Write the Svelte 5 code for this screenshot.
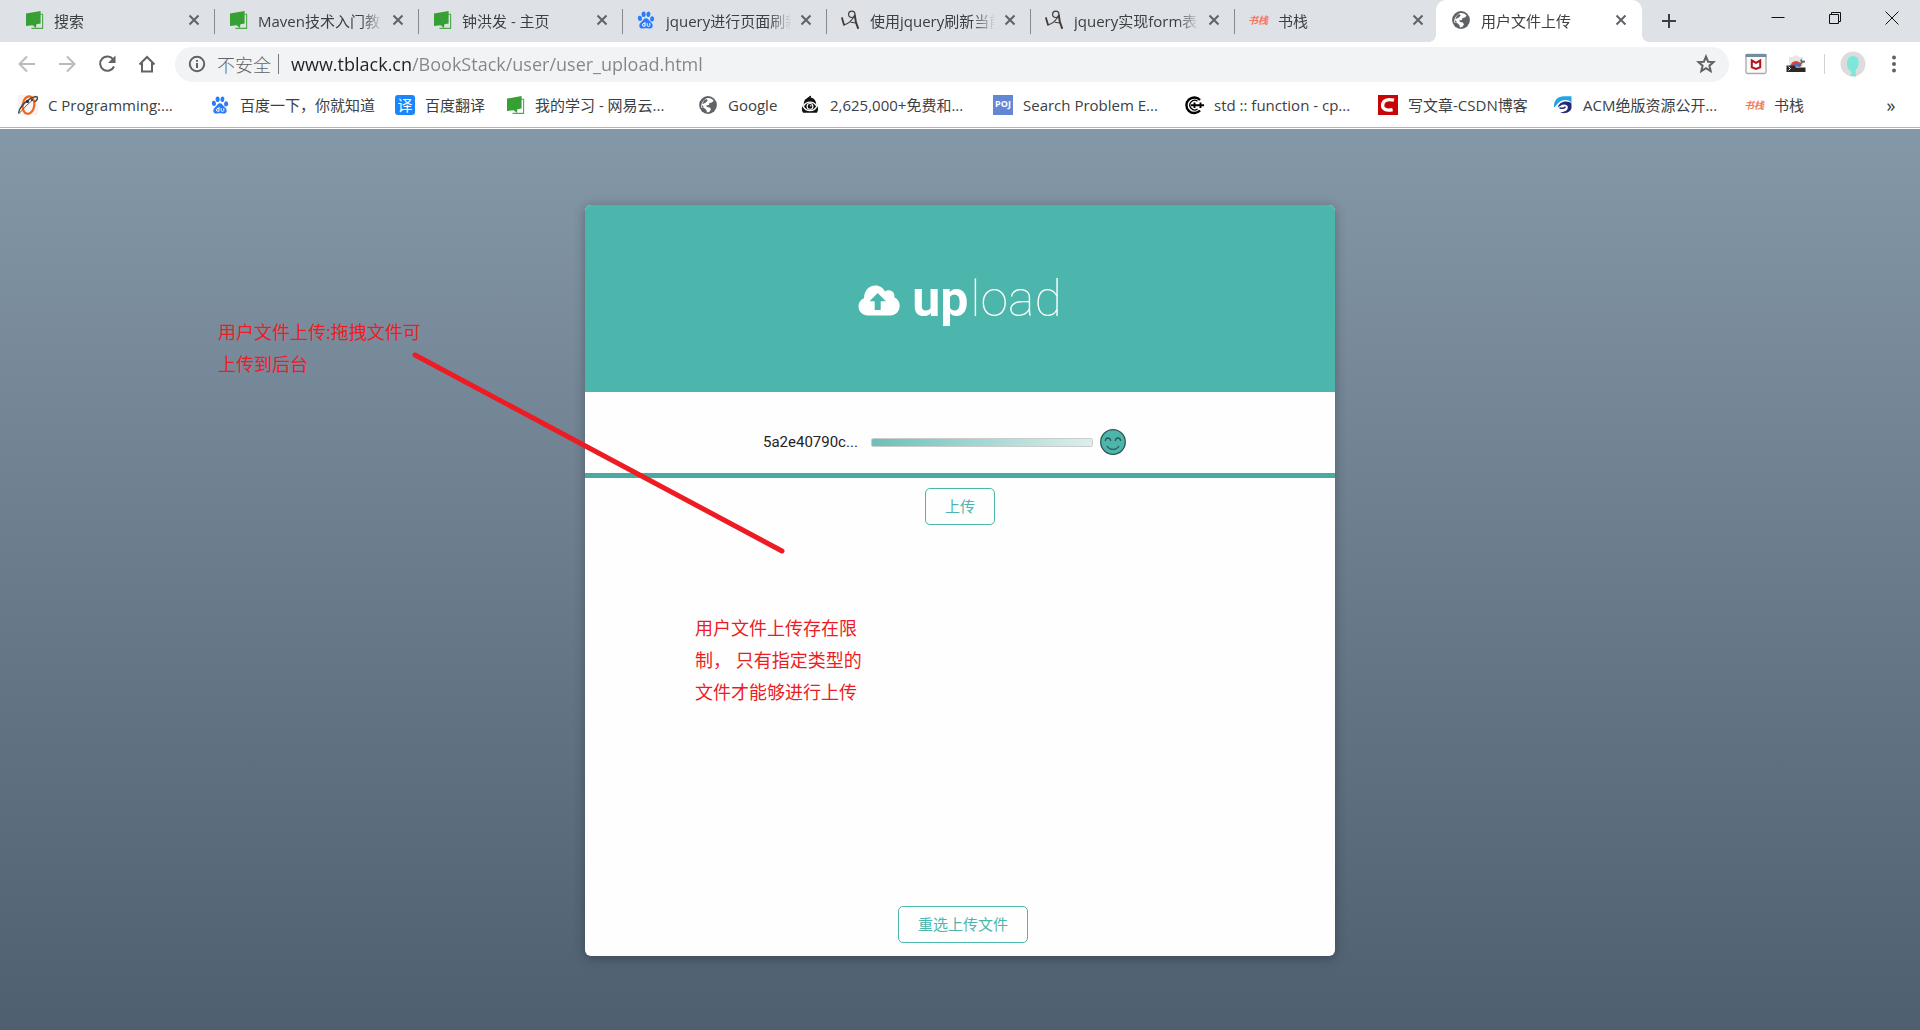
<script>
  const tabs = [
    { icon: 'book', title: '搜索' },
    { icon: 'book', title: 'Maven技术入门教' },
    { icon: 'book', title: '钟洪发 - 主页' },
    { icon: 'baidu', title: 'jquery进行页面刷新' },
    { icon: 'script', title: '使用jquery刷新当前' },
    { icon: 'script', title: 'jquery实现form表' },
    { icon: 'stack', title: '书栈' },
    { icon: 'globe', title: '用户文件上传', active: true }
  ];

  const bookmarks = [
    { icon: 'orbit', title: 'C Programming:...' },
    { icon: 'baidu', title: '百度一下，你就知道' },
    { icon: 'fanyi', title: '百度翻译' },
    { icon: 'book', title: '我的学习 - 网易云...' },
    { icon: 'globe', title: 'Google' },
    { icon: 'eye', title: '2,625,000+免费和...' },
    { icon: 'poj', title: 'Search Problem E...' },
    { icon: 'cpp', title: 'std :: function - cp...' },
    { icon: 'csdn', title: '写文章-CSDN博客' },
    { icon: 'acm', title: 'ACM绝版资源公开...' },
    { icon: 'stack', title: '书栈' }
  ];

  let url = $state('www.tblack.cn/BookStack/user/user_upload.html');
</script>

{#snippet favicon(name)}
  {#if name === 'stack'}
    <span class="fav stack-mark" aria-hidden="true">书栈</span>
  {:else if name === 'fanyi'}
    <span class="fav fanyi-mark" aria-hidden="true">译</span>
  {:else if name === 'poj'}
    <span class="fav poj-mark" aria-hidden="true">POJ</span>
  {:else}
    <svg class="fav" viewBox="0 0 20 20" aria-hidden="true">
      {#if name === 'book'}
        <path d="M15.5 4.2h3.1v14.2H7.5" fill="none" stroke="#4fa94a" stroke-width="1.1" />
        <path d="M2 3.6 16.6 1v12.6l-4.2.6-.5 3.8-3.2-2.7L2 15.9z" fill="#37a035" />
      {:else if name === 'baidu'}
        <g fill="#2b7cf6">
          <ellipse cx="3.9" cy="8.4" rx="2.1" ry="2.7" transform="rotate(-12 3.9 8.4)" />
          <ellipse cx="7.6" cy="4.2" rx="2" ry="2.8" />
          <ellipse cx="12.4" cy="4.3" rx="2" ry="2.8" transform="rotate(8 12.4 4.3)" />
          <ellipse cx="16.1" cy="8.9" rx="2" ry="2.7" transform="rotate(8 16.1 8.9)" />
          <path d="M10 8.2c2 0 2.6 1.8 3.8 3 1.400 1.300 3.200 2.500 2.900 4.800-.3 2.300-2.300 2.800-4 2.500-2-.3-3.500-.3-5.400 0-1.900.3-3.800-.3-4-2.600-.2-2.200 1.500-3.300 2.900-4.700C7.400 10 8 8.200 10 8.200z" />
        </g>
        <path d="M9 12v4.500M9 14.200a1.400 1.400 0 1 0 0 1.400M11.200 13.200v2.200c0 1.400 2.600 1.400 2.600 0v-2.200" fill="none" stroke="#fff" stroke-width="1" />
      {:else if name === 'script'}
        <g fill="none" stroke="#403b38" stroke-linecap="round" stroke-linejoin="round">
          <circle cx="11.800" cy="4.300" r="3.200" stroke-width="1.200" />
          <path d="M2 8 4 14.800" stroke-width="1.800" />
          <path d="M4 14.800C8 14.300 11.500 10.500 13.800 7M11 12.300l4.800.7" stroke-width="1.100" />
          <path d="M14.800 5.500c.4 4.500 1.300 8.500 3.200 12.500" stroke-width="2" />
        </g>
      {:else if name === 'globe'}
        <circle cx="10" cy="10" r="8.900" fill="#5f6368" />
        <path d="M9.600 2.900c2.600-.2 4.900 1 6.100 2.900l-1.800 1.700-2.400.4-.6 2-2.800.5 1 1.600 2.700.5 1.200 1.700-1.500 2.600-2.500.8-.6-2.700-2-1.700-3.300-.8C2.800 8.500 5.500 4 9.600 2.900z" fill="#fff" />
        <path d="m6 5.500 2.500-1.600 1.200 1.700-2.200 2.200L4.200 9.300zM3.200 10.500l2 .3.500 3.400z" fill="#5f6368" />
      {:else if name === 'orbit'}
        <rect width="20" height="20" fill="#f4f4f4" />
        <ellipse cx="10.500" cy="10" rx="5.800" ry="8.800" fill="none" stroke="#f1661b" stroke-width="2.200" transform="rotate(8 10 10)" />
        <path d="M1 18.500C-.5 15 6 7.500 12 3.800c4-2.500 7.500-2.800 7.500-.8 0 1.500-1.500 3-3 4" fill="none" stroke="#444" stroke-width="1.400" />
        <path d="m1 18.500 8-8.500 5-4.500" fill="none" stroke="#666" stroke-width="1" />
        <circle cx="9.500" cy="6.500" r="1.500" fill="#222" /><circle cx="14" cy="5" r="1" fill="#222" />
      {:else if name === 'eye'}
        <path d="M7 3.200 9.800 1c1.500-.6 1.800.8.600 1.500 3.800.6 6 3.500 5.800 7.300 2.200 2 2.600 5.200.6 8H3.200c-2-2.800-1.600-6 .6-8C3.600 6.500 4.600 4.500 7 3.200z" fill="#111" />
        <path d="M3.200 11.400C6.200 5.700 13.800 5.700 16.800 11.400 13.800 17.100 6.200 17.100 3.200 11.400z" fill="none" stroke="#fff" stroke-width="1.300" />
        <circle cx="10" cy="11.400" r="2.900" fill="none" stroke="#fff" stroke-width="1.100" /><circle cx="10.800" cy="10.800" r=".8" fill="#fff" />
      {:else if name === 'cpp'}
        <path d="M16 5A7.800 7.800 0 1 0 16 15.500" fill="none" stroke="#000" stroke-width="2.400" />
        <path d="M13.500 6.200A4.800 4.800 0 1 0 13.500 14" fill="none" stroke="#000" stroke-width="1.300" />
        <path d="M7 10.200h13M10.500 7.500v5.500M16.500 7.500v5.500" stroke="#000" stroke-width="1.900" />
      {:else if name === 'csdn'}
        <rect width="20" height="20" fill="#c90404" />
        <path d="M16 5.200C9.500 3.500 5 5.500 4.600 10c-.3 4.200 3.800 6 10 4.600" fill="none" stroke="#fff" stroke-width="3.400" />
      {:else if name === 'acm'}
        <path d="M1 12.500C.5 5 5 1.200 11 1.200h7.500v7C17 5 12 4 8 6 4.500 7.800 3.500 11 1 12.500z" fill="#20a6e5" />
        <path d="M18.500 8.500v4.500c-1 4.500-7 6.500-11.500 4.300 5.500 0 8-2.500 7.800-5.300-.2-2.500-3.800-3.500-7-1.500l-3 2c.8-3.800 4.200-6 8-6 3 0 4.700.8 5.700 2z" fill="#252a78" />
        <path d="M6.500 13c2.500.6 4.800.2 6-1.300" fill="none" stroke="#252a78" stroke-width="1.500" />
      {/if}
    </svg>
  {/if}
{/snippet}

<div class="window">
  <header class="chrome">
    <div class="tab-strip">
      <div class="tabs" role="tablist">
        {#each tabs as tab}
          <div class="tab" class:active={tab.active}>
            {@render favicon(tab.icon)}
            <button class="tab-title" role="tab" aria-selected={!!tab.active}>{tab.title}</button>
            <button class="tab-close" aria-label="关闭标签页">
              <svg viewBox="0 0 12 12"><path d="m1.500 1.500 9 9m0-9-9 9" /></svg>
            </button>
          </div>
        {/each}
      </div>
      <button class="new-tab" aria-label="新标签页">
        <svg viewBox="0 0 16 16"><path d="M8 1v14M1 8h14" /></svg>
      </button>
      <div class="window-controls">
        <button aria-label="最小化"><svg viewBox="0 0 14 14"><path d="M.5 6.500h13" /></svg></button>
        <button aria-label="还原"><svg viewBox="0 0 14 14"><path d="M1.500 3.500h9v9h-9zM3.500 3.500v-2h9v9h-2" /></svg></button>
        <button aria-label="关闭"><svg viewBox="0 0 14 14"><path d="m.5.5 13 13m0-13-13 13" /></svg></button>
      </div>
    </div>

    <div class="toolbar">
      <nav class="nav-buttons" aria-label="导航">
        <button class="dim" aria-label="后退"><svg viewBox="0 0 20 20"><path d="M18 10H3M10 2.500 2.500 10l7.500 7.500" /></svg></button>
        <button class="dim" aria-label="前进"><svg viewBox="0 0 20 20"><path d="M2 10h15M10 2.500l7.500 7.500-7.500 7.500" /></svg></button>
        <button aria-label="重新加载"><svg viewBox="0 0 20 20"><path d="M16.300 5.500A7.200 7.200 0 1 0 17 12.500" /><path class="solid" d="M18.500 1.500v7.500H11z" /></svg></button>
        <button aria-label="主页"><svg viewBox="0 0 20 20"><path d="M2.500 10.500 10 3l7.500 7.500M5 9v8.500h10V9" /></svg></button>
      </nav>
      <div class="omnibox">
        <svg class="info" viewBox="0 0 18 18" aria-hidden="true"><circle cx="9" cy="9" r="7.200" /><path d="M9 8v5M9 5v1.800" /></svg>
        <span class="insecure">不安全</span>
        <span class="bar"></span>
        <input class="url" type="text" aria-label="地址栏" bind:value={url} />
        <button class="star" aria-label="为此标签页添加书签">
          <svg viewBox="0 0 20 20"><path d="m10 2.500 2.100 5.200 5.500.4-4.200 3.600 1.300 5.500L10 14.200l-4.700 3 1.300-5.500L2.400 8.100l5.500-.4z" /></svg>
        </button>
      </div>
      <div class="extensions">
        <button aria-label="McAfee">
          <svg viewBox="0 0 22 22"><rect x="1" y="1.500" width="20" height="19" rx="1.500" fill="#fafafa" stroke="#aaa" stroke-width="1.300" /><path d="M.5 1h21v3H.5z" fill="#728d9b" /><path d="M6.800 7.500 11 9.800l4.200-2.300v6.800L11 16l-4.200-1.700z" fill="none" stroke="#b5121b" stroke-width="2" /></svg>
        </button>
        <button aria-label="开发者工具">
          <svg viewBox="0 0 22 22"><path d="M4 4h4l1-1.500h4L14 4h4v9H4z" fill="#e6e6e6" /><path d="M5.500 13.500a5.500 5.500 0 0 1 11 0z" fill="#e24335" /><path d="M8.500 13.500a3 3 0 0 1 6 0z" fill="#3975d8" /><path d="m13.500 13.500 4-5m-1.500-2 .8 2.500 3.200-.5" fill="none" stroke="#666" stroke-width="1.800" /><path d="M1.500 12.500h8l1.500 2h9.500v4.500h-19z" fill="#292929" /><path d="m3.500 13.500 2 2-2 2" fill="none" stroke="#fff" stroke-width="1" /></svg>
        </button>
        <span class="divider"></span>
        <button class="avatar" aria-label="个人资料">
          <svg viewBox="0 0 26 26"><circle cx="13" cy="13" r="12.500" fill="#dcdcdc" /><path d="M13 5c4 0 6 3 5.700 7-.2 3.500-1.500 5.500-3 6.500v3c0 1.500.8 2.500.3 3.900-2 .2-5-.1-6.500-1.100 2-.8 2.300-3.300 1-4.300C8 18.500 7 15.500 7 12c0-4 2-7 6-7z" fill="#7de8d9" /></svg>
        </button>
        <button class="menu" aria-label="菜单">
          <svg viewBox="0 0 20 20"><circle cx="10" cy="3.500" r="2" /><circle cx="10" cy="10" r="2" /><circle cx="10" cy="16.500" r="2" /></svg>
        </button>
      </div>
    </div>

    <nav class="bookmarks" aria-label="书签">
      {#each bookmarks as mark}
        <a href="#bookmark">{@render favicon(mark.icon)}<span>{mark.title}</span></a>
      {/each}
      <button class="more" aria-label="更多书签">»</button>
    </nav>
  </header>

  <main class="page">
    <section class="card">
      <h1 class="hero">
        <svg viewBox="0 0 42 31" aria-hidden="true"><path fill-rule="evenodd" d="M10 30.500C4.500 30.500.5 26.700.5 21.600c0-4 2.200-6.900 5.600-8.300C6 5.800 11 .5 17.300.5c4.300 0 7.900 2.300 9.700 6 1.100-.8 2.300-1.200 3.700-1.200 3.700 0 6.300 3 5.700 7.200 3.200 1.400 5.300 4.600 5.300 8.300 0 5.500-4 9.700-9.700 9.700zM19.700 8 11.500 16.300h5.200V25h6v-8.700h5.200z" /></svg>
        <span><b>up</b>load</span>
      </h1>
      <div class="file-row">
        <label for="file-progress">5a2e40790c...</label>
        <progress id="file-progress" value="100" max="100"></progress>
        <svg class="smile" viewBox="0 0 26 26" aria-hidden="true"><circle cx="13" cy="13" r="12.300" /><path d="M5.300 12c.3-4 5-4 5.400 0M15.300 12c.3-4 5-4 5.400 0M7 17c2.500 4.500 9.500 4.500 12 0" /></svg>
      </div>
      <div class="actions">
        <button class="outline">上传</button>
        <button class="outline reset">重选上传文件</button>
      </div>
    </section>

    <svg class="pointer" viewBox="0 0 376 204" aria-hidden="true"><path d="m4 4 367 196" /></svg>
    <p class="note drag-note">用户文件上传:拖拽文件可<br />上传到后台</p>
    <p class="note limit-note">用户文件上传存在限<br />制， 只有指定类型的<br />文件才能够进行上传</p>
  </main>
</div>

<style>
  :global(body) {
    margin: 0;
  }

  .window {
    display: flex;
    flex-direction: column;
    min-height: 100vh;
    font-family: 'Open Sans', 'Noto Sans CJK SC', sans-serif;
    font-size: 15px;
    color: #3c4043;
  }

  .window :global(*) {
    box-sizing: border-box;
  }

  button {
    display: flex;
    align-items: center;
    justify-content: center;
    padding: 0;
    border: 0;
    background: none;
    font: inherit;
    color: inherit;
    cursor: pointer;
  }

  svg {
    display: block;
    flex: none;
  }

  .chrome {
    background: #fff;
    border-bottom: 1px solid #fff;
    box-shadow: inset 0 -1px #b0b5b5;
  }

  /* tab strip */
  .tab-strip {
    display: flex;
    height: 42px;
    padding-left: 11px;
    background: #dee1e6;
  }

  .tabs {
    display: flex;
  }

  .tab {
    position: relative;
    display: flex;
    align-items: center;
    width: 204px;
    padding: 0 15px 2px 13px;
  }

  .tab:not(.active)::after {
    content: '';
    position: absolute;
    right: 0;
    top: 9px;
    width: 1px;
    height: 25px;
    background: #85888c;
  }

  .tab:nth-last-child(2)::after {
    display: none;
  }

  .tab.active {
    width: 206px;
    margin-left: -3px;
    padding-left: 15px;
    background: #fff;
    border-radius: 10px 10px 0 0;
  }

  .tab.active::before,
  .tab.active::after {
    content: '';
    position: absolute;
    bottom: 0;
    width: 8px;
    height: 8px;
  }

  .tab.active::before {
    right: 100%;
    background: radial-gradient(circle at 0 0, transparent 8px, #fff 8px);
  }

  .tab.active::after {
    left: 100%;
    background: radial-gradient(circle at 100% 0, transparent 8px, #fff 8px);
  }

  .fav {
    flex: none;
    width: 20px;
    height: 20px;
    line-height: 20px;
    text-align: center;
  }

  .stack-mark {
    display: inline-block;
    font-size: 10px;
    font-weight: bold;
    font-style: italic;
    color: #f4785f;
  }

  .fanyi-mark {
    border-radius: 3px;
    background: #1a86fa;
    color: #fff;
  }

  .poj-mark {
    overflow: hidden;
    background: #6487d4;
    color: #fff;
    font-size: 9px;
    font-weight: bold;
    line-height: 18px;
  }

  .tab-title {
    flex: 1;
    justify-content: flex-start;
    height: 24px;
    margin-left: 10px;
    overflow: hidden;
    white-space: nowrap;
    mask-image: linear-gradient(90deg, #000 80%, transparent 98%);
  }

  .tab-close {
    width: 20px;
    height: 20px;
    margin-left: 2px;
    margin-right: -4px;
  }

  .tab-close svg {
    width: 12px;
    height: 12px;
    stroke: #5f6368;
    stroke-width: 2;
  }

  .new-tab {
    width: 28px;
    margin-left: 13px;
  }

  .new-tab svg {
    width: 16px;
    stroke: #3c4043;
    stroke-width: 2;
  }

  .window-controls {
    display: flex;
    height: 36px;
    margin-left: auto;
  }

  .window-controls button {
    width: 57px;
  }

  .window-controls svg {
    width: 14px;
    fill: none;
    stroke: #111;
    stroke-width: 1;
  }

  /* toolbar */
  .toolbar {
    display: flex;
    align-items: center;
    height: 44px;
    padding-left: 7px;
    padding-right: 16px;
  }

  .nav-buttons {
    display: flex;
    width: 168px;
  }

  .nav-buttons button {
    width: 40px;
    height: 36px;
  }

  .nav-buttons svg {
    width: 20px;
    fill: none;
    stroke: #5f6368;
    stroke-width: 2;
  }

  .nav-buttons .dim svg {
    stroke: #b9bbbe;
  }

  .nav-buttons .solid {
    fill: #5f6368;
    stroke: none;
  }

  .omnibox {
    display: flex;
    align-items: center;
    flex: 1;
    height: 35px;
    padding: 0 12px 0 13px;
    border-radius: 18px;
    background: #f1f3f4;
    font-size: 18px;
  }

  .info {
    width: 18px;
    fill: none;
    stroke: #5f6368;
    stroke-width: 2;
  }

  .insecure {
    margin-left: 11px;
    color: #5f6368;
    font-weight: 300;
  }

  .bar {
    width: 1px;
    height: 20px;
    margin: 0 12px 0 7px;
    background: #777b80;
  }

  .url {
    flex: 1;
    min-width: 0;
    height: 30px;
    padding: 0;
    border: 0;
    outline: 0;
    font: inherit;
    color: transparent;
    background: linear-gradient(90deg, #202124 121px, #80868b 121px);
    background-clip: text;
  }

  .star {
    width: 22px;
    height: 28px;
  }

  .star svg {
    width: 20px;
    fill: none;
    stroke: #5f6368;
    stroke-width: 2;
  }

  .extensions {
    display: flex;
    align-items: center;
    margin-left: 16px;
  }

  .extensions svg {
    width: 22px;
  }

  .extensions button + button {
    margin-left: 18px;
  }

  .divider {
    width: 1px;
    height: 20px;
    margin: 0 15px 0 17px;
    background: #d0d2d5;
  }

  .extensions .avatar svg {
    width: 26px;
  }

  .extensions .menu svg {
    width: 20px;
    fill: #5f6368;
  }

  /* bookmarks */
  .bookmarks {
    display: grid;
    grid-template-columns: 192px 185px 110px 193px 102px 193px 191px 194px 175px 191px auto 20px;
    align-items: center;
    height: 42px;
    padding: 0 19px 5px 18px;
  }

  .bookmarks a {
    display: flex;
    align-items: center;
    gap: 10px;
    color: inherit;
    text-decoration: none;
    white-space: nowrap;
  }

  .more {
    font-size: 18px;
  }

  /* page */
  .page {
    position: relative;
    display: flex;
    flex: 1;
    align-items: center;
    justify-content: center;
    padding: 76px 20px 74px;
    background: linear-gradient(#8598a8, #4e5f70);
  }

  .card {
    display: flex;
    flex-direction: column;
    width: 750px;
    min-height: 751px;
    overflow: hidden;
    border-radius: 6px;
    background: #fefefe;
    box-shadow: 0 2px 12px rgba(0, 0, 0, 0.3);
  }

  .hero {
    display: flex;
    align-items: center;
    justify-content: center;
    gap: 12px;
    height: 187px;
    margin: 0;
    background: #4db6ac;
    color: #fff;
    font-family: Roboto, sans-serif;
    font-size: 50px;
    font-weight: 100;
  }

  .hero b {
    margin-right: 2px;
    font-weight: 700;
  }

  .hero svg {
    width: 42px;
    margin-top: 4px;
    fill: #fff;
  }

  .file-row {
    display: flex;
    align-items: center;
    height: 86px;
    padding: 19px 0 0 178px;
    border-bottom: 5px solid #49aaa1;
    color: #222;
    font-family: Roboto, sans-serif;
  }

  .file-row label {
    width: 108px;
  }

  progress {
    width: 222px;
    height: 9px;
    border: 1px solid #ccc;
    border-radius: 2px;
    appearance: none;
    background: #eee;
    overflow: hidden;
  }

  progress::-webkit-progress-bar {
    background: #eee;
  }

  progress::-webkit-progress-value {
    background: linear-gradient(90deg, #6ac1b8, #dcefed);
  }

  .smile {
    width: 26px;
    margin-left: 7px;
    fill: #4db6ac;
    stroke: #2d5753;
    stroke-width: 1.3;
  }

  .smile path {
    fill: none;
  }

  .actions {
    display: flex;
    flex: 1;
    flex-direction: column;
    align-items: center;
    justify-content: space-between;
    padding: 10px 0 13px;
  }

  .outline {
    height: 37px;
    padding: 0 19px 2px;
    border: 1px solid #4db6ac;
    border-radius: 5px;
    color: #4db6ac;
  }

  .reset {
    margin-left: 6px;
  }

  /* annotations laid over the page */
  .note {
    position: absolute;
    margin: 0;
    color: #ed1c24;
    font-size: 18px;
    line-height: 32px;
    white-space: nowrap;
  }

  .drag-note {
    left: 218px;
    top: 187px;
  }

  .limit-note {
    left: 695px;
    top: 483px;
  }

  .pointer {
    position: absolute;
    left: 411px;
    top: 222px;
    width: 376px;
    fill: none;
    stroke: #ed1c24;
    stroke-width: 5;
    stroke-linecap: round;
  }
</style>
